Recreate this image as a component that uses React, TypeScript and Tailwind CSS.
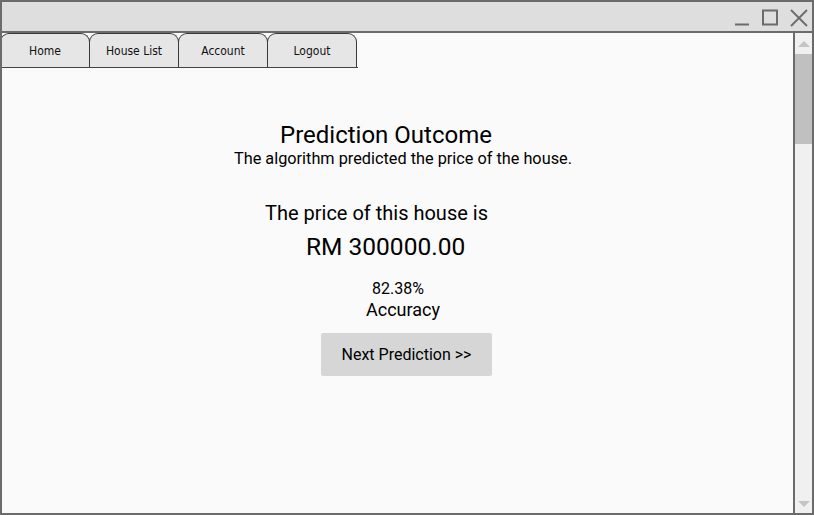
import React from 'react';

const tabs = ['Home', 'House List', 'Account', 'Logout'];

function WindowControls() {
  return (
    <div className="flex items-center gap-[12px] pr-[4px] pt-[2px] text-[#6b6b6b]">
      <svg width="16" height="18" viewBox="0 0 16 18">
        <path d="M1 15.5h14" stroke="currentColor" strokeWidth="2" />
      </svg>
      <svg width="16" height="18" viewBox="0 0 16 18">
        <rect x="1" y="1.5" width="14" height="14" fill="none" stroke="currentColor" strokeWidth="2" />
      </svg>
      <svg width="18" height="18" viewBox="0 0 18 18">
        <path d="M1 1l16 16M17 1L1 17" stroke="currentColor" strokeWidth="1.8" />
      </svg>
    </div>
  );
}

function Scrollbar() {
  return (
    <div className="w-[19px] shrink-0 border-l-2 border-[#6b6b6b] bg-[#f0f0f0] flex flex-col">
      <div className="h-[21px] flex items-center justify-center">
        <svg width="12" height="8" viewBox="0 0 12 8">
          <path d="M0 7L6 1l6 6z" fill="#c4c4c4" />
        </svg>
      </div>
      <div className="h-[90px] bg-[#c0c0c0]" />
      <div className="flex-1" />
      <div className="h-[18px] flex items-center justify-center">
        <svg width="12" height="8" viewBox="0 0 12 8">
          <path d="M0 1l6 6 6-6z" fill="#c4c4c4" />
        </svg>
      </div>
    </div>
  );
}

export default function App() {
  return (
    <div className="w-[814px] h-[515px] border-2 border-[#6b6b6b] bg-[#fafafa] flex flex-col overflow-hidden" style={{ fontFamily: 'Roboto, sans-serif' }}>
      {/* Title bar */}
      <div className="h-[31px] shrink-0 bg-[#dedede] border-b-2 border-[#6b6b6b] flex justify-end items-center">
        <WindowControls />
      </div>

      <div className="flex flex-1 min-h-0">
        {/* Main content */}
        <div className="flex-1 flex flex-col items-start text-black">
          {/* Tabs */}
          <div className="flex h-[35px] w-[358px] -ml-[2px] border-b border-[#444]">
            {tabs.map((t) => (
              <div
                key={t}
                className="w-[90px] h-[34px] shrink-0 -mr-px bg-[#e6e6e6] border border-b-0 border-[#3a3a3a] rounded-t-[9px] flex items-center justify-center text-[12px] text-[#111]"
                style={{ fontFamily: '"Liberation Sans Narrow", "DejaVu Sans Condensed", "Liberation Sans", sans-serif' }}
              >
                {t}
              </div>
            ))}
          </div>

          <div className="mt-[54px] ml-[278px] text-[24px] leading-[27px]">Prediction Outcome</div>
          <div className="ml-[232px] text-[16.3px] leading-[19px]">
            The algorithm predicted the price of the house.
          </div>
          <div className="mt-[33px] ml-[263px] text-[20px] leading-[24px]">The price of this house is</div>
          <div className="mt-[8px] ml-[304px] text-[24.5px] leading-[28px]">RM 300000.00</div>
          <div className="mt-[19px] ml-[370px] text-[16px] leading-[18px]">82.38%</div>
          <div className="mt-[1px] ml-[364px] text-[18px] leading-[21px]">Accuracy</div>
          <button className="mt-[13px] ml-[319px] w-[171px] h-[43px] bg-[#d6d6d6] rounded-[2px] text-[16px] flex items-center justify-center">
            Next Prediction &gt;&gt;
          </button>
        </div>

        <Scrollbar />
      </div>
    </div>
  );
}
